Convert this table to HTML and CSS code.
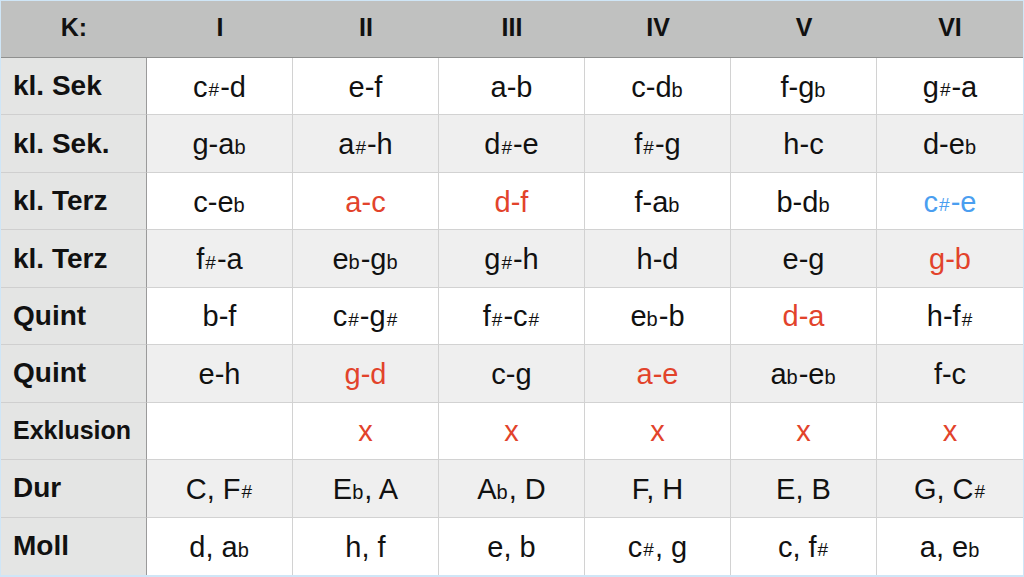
FILE: index.html
```html
<!DOCTYPE html>
<html lang="de">
<head>
<meta charset="utf-8">
<title>Tabelle</title>
<link rel="stylesheet" href="styles.css">
</head>
<body>
<div class="table">
  <div class="hd corner">K:</div>
  <div class="hd">I</div>
  <div class="hd">II</div>
  <div class="hd">III</div>
  <div class="hd">IV</div>
  <div class="hd">V</div>
  <div class="hd">VI</div>

  <div class="lbl">kl. Sek</div>
  <div class="c">c<span class="a">#</span>-d</div>
  <div class="c">e-f</div>
  <div class="c">a-b</div>
  <div class="c">c-d<span class="a b">b</span></div>
  <div class="c">f-g<span class="a b">b</span></div>
  <div class="c">g<span class="a">#</span>-a</div>

  <div class="lbl alt">kl. Sek.</div>
  <div class="c alt">g-a<span class="a b">b</span></div>
  <div class="c alt">a<span class="a">#</span>-h</div>
  <div class="c alt">d<span class="a">#</span>-e</div>
  <div class="c alt">f<span class="a">#</span>-g</div>
  <div class="c alt">h-c</div>
  <div class="c alt">d-e<span class="a b">b</span></div>

  <div class="lbl">kl. Terz</div>
  <div class="c">c-e<span class="a b">b</span></div>
  <div class="c red">a-c</div>
  <div class="c red">d-f</div>
  <div class="c">f-a<span class="a b">b</span></div>
  <div class="c">b-d<span class="a b">b</span></div>
  <div class="c blue">c<span class="a">#</span>-e</div>

  <div class="lbl alt">kl. Terz</div>
  <div class="c alt">f<span class="a">#</span>-a</div>
  <div class="c alt">e<span class="a b">b</span>-g<span class="a b">b</span></div>
  <div class="c alt">g<span class="a">#</span>-h</div>
  <div class="c alt">h-d</div>
  <div class="c alt">e-g</div>
  <div class="c alt red">g-b</div>

  <div class="lbl">Quint</div>
  <div class="c">b-f</div>
  <div class="c">c<span class="a">#</span>-g<span class="a">#</span></div>
  <div class="c">f<span class="a">#</span>-c<span class="a">#</span></div>
  <div class="c">e<span class="a b">b</span>-b</div>
  <div class="c red">d-a</div>
  <div class="c">h-f<span class="a">#</span></div>

  <div class="lbl alt">Quint</div>
  <div class="c alt">e-h</div>
  <div class="c alt red">g-d</div>
  <div class="c alt">c-g</div>
  <div class="c alt red">a-e</div>
  <div class="c alt">a<span class="a b">b</span>-e<span class="a b">b</span></div>
  <div class="c alt">f-c</div>

  <div class="lbl small">Exklusion</div>
  <div class="c"></div>
  <div class="c red">x</div>
  <div class="c red">x</div>
  <div class="c red">x</div>
  <div class="c red">x</div>
  <div class="c red">x</div>

  <div class="lbl alt">Dur</div>
  <div class="c alt">C, F<span class="a">#</span></div>
  <div class="c alt">E<span class="a b">b</span>, A</div>
  <div class="c alt">A<span class="a b">b</span>, D</div>
  <div class="c alt">F, H</div>
  <div class="c alt">E, B</div>
  <div class="c alt">G, C<span class="a">#</span></div>

  <div class="lbl last">Moll</div>
  <div class="c last">d, a<span class="a b">b</span></div>
  <div class="c last">h, f</div>
  <div class="c last">e, b</div>
  <div class="c last">c<span class="a">#</span>, g</div>
  <div class="c last">c, f<span class="a">#</span></div>
  <div class="c last">a, e<span class="a b">b</span></div>
</div>
</body>
</html>
```

FILE: styles.css
```css
html, body {
  margin: 0;
  padding: 0;
  background: #cfe6f7;
}
.table {
  box-sizing: border-box;
  width: 1024px;
  height: 577px;
  border-left: 1px solid #cfe6f7;
  border-top: 1px solid #cfe6f7;
  border-right: 1px solid #cfe6f7;
  border-bottom: 2px solid #cfe6f7;
  display: grid;
  grid-template-columns: 146px repeat(6, 146px);
  grid-template-rows: 57px repeat(9, 1fr);
  font-family: "Liberation Sans", Arial, sans-serif;
  color: #111;
}
.table > div {
  display: flex;
  align-items: center;
  border-right: 1px solid #d2d2d2;
  border-bottom: 1px solid #d2d2d2;
  background: #ffffff;
  white-space: nowrap;
}
.table > .hd {
  background: #c0c1c0;
  justify-content: center;
  font-weight: bold;
  font-size: 25px;
  border-right: none;
  border-bottom: 1px solid #8f908f;
  padding-bottom: 4px;
}
.table > .lbl {
  background: #e4e5e4;
  font-weight: bold;
  font-size: 28px;
  padding-left: 12px;
  border-right: 1px solid #9a9a9a;
  border-bottom: 1px solid #cfcfcf;
}
.table > .lbl.small {
  font-size: 25px;
}
.table > .c {
  justify-content: center;
  font-size: 29px;
  padding-top: 2px;
}
.table > .c.alt {
  background: #efefef;
}
.table > .last {
  border-bottom: none;
}
.table > div:nth-child(7n) {
  border-right: none;
}
.a {
  font-size: 19px;
  position: relative;
  top: 3px;
  margin-left: 1px;
  margin-right: 1px;
}
.a.b {
  font-size: 20px;
  top: 3px;
  margin-left: 0;
}
.red {
  color: #e2432b;
}
.blue {
  color: #4a9ef0;
}
```
